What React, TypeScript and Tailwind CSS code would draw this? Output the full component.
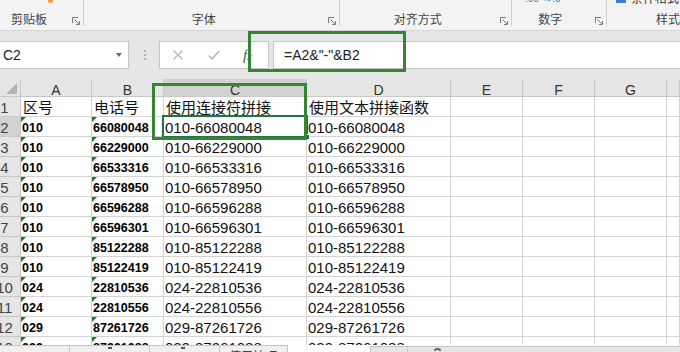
import { Fragment } from 'react';

const rows: [string, string][] = [
  ['010', '66080048'],
  ['010', '66229000'],
  ['010', '66533316'],
  ['010', '66578950'],
  ['010', '66596288'],
  ['010', '66596301'],
  ['010', '85122288'],
  ['010', '85122419'],
  ['024', '22810536'],
  ['024', '22810556'],
  ['029', '87261726'],
  ['029', '87261088'],
];

const letters = ['A', 'B', 'C', 'D', 'E', 'F', 'G', ''];

function Launcher() {
  return (
    <svg width="8" height="8" viewBox="0 0 8 8" fill="none" stroke="#7a7a7a" strokeWidth="1" className="mb-[1px] mr-[3px] ml-auto shrink-0">
      <path d="M0.5 6V0.5H6" />
      <path d="M2.5 2.5L7 7" />
      <path d="M4 7.5H7.5V4" />
    </svg>
  );
}

function Ribbon() {
  return (
    <div className="h-[31px] flex bg-[#f3f3f3] border-b border-[#d5d5d5] font-['Noto_Sans_CJK_SC',sans-serif] text-[#444]">
      <div className="w-[84px] h-[26px] flex flex-col border-r border-[#cfcfcf]">
        <div className="h-[4px] overflow-hidden flex items-start">
          <div className="ml-[48px] w-[5px] h-[3px] bg-[#e9a23b] rounded-b-[2px]" />
        </div>
        <div className="h-[8px]" />
        <div className="h-[14px] flex items-end">
          <span className="ml-[11px] text-[12px] leading-[14px]">剪贴板</span>
          <Launcher />
        </div>
      </div>
      <div className="w-[257px] h-[26px] flex flex-col border-r border-[#cfcfcf]">
        <div className="h-[12px]" />
        <div className="h-[14px] flex items-end">
          <span className="ml-[108px] text-[12px] leading-[14px]">字体</span>
          <Launcher />
        </div>
      </div>
      <div className="w-[173px] h-[26px] flex flex-col border-r border-[#cfcfcf]">
        <div className="h-[12px]" />
        <div className="h-[14px] flex items-end">
          <span className="ml-[54px] text-[12px] leading-[14px]">对齐方式</span>
          <Launcher />
        </div>
      </div>
      <div className="w-[95px] h-[26px] flex flex-col border-r border-[#cfcfcf]">
        <div className="h-[4px] overflow-hidden flex items-end font-['Liberation_Sans',sans-serif] text-[10px] leading-[10px]">
          <span className="ml-[13px] text-[#777]">.00</span>
          <span className="ml-[3px] text-[#2f6fc1]">→.0</span>
        </div>
        <div className="h-[8px]" />
        <div className="h-[14px] flex items-end">
          <span className="ml-[26px] text-[12px] leading-[14px]">数字</span>
          <Launcher />
        </div>
      </div>
      <div className="flex-1 h-[26px] flex flex-col">
        <div className="h-[4px] overflow-hidden flex items-end">
          <div className="ml-[9px] w-[10px] h-[3px] bg-[#3b7dd8] mb-[1px]" />
          <span className="ml-[5px] text-[12px] leading-[12px] text-[#333]">条件格式</span>
        </div>
        <div className="h-[8px]" />
        <div className="h-[14px] flex items-end">
          <span className="ml-[49px] text-[12px] leading-[14px] whitespace-nowrap">样式</span>
        </div>
      </div>
    </div>
  );
}

function FormulaBar() {
  return (
    <div className="mt-[10px] mb-[10px] h-[28px] flex font-['Liberation_Sans',sans-serif]">
      <div className="w-[129px] flex items-center bg-white border border-l-0 border-[#c6c6c6]">
        <span className="ml-[3px] text-[14px] text-[#222]">C2</span>
        <div className="ml-auto mr-[6px] w-0 h-0 border-x-[3px] border-x-transparent border-t-[4px] border-t-[#666]" />
      </div>
      <div className="w-[30px] flex items-center justify-center">
        <div className="flex flex-col gap-[2px] ml-[2px]">
          <div className="w-[2px] h-[2px] bg-[#b0b0b0]" />
          <div className="w-[2px] h-[2px] bg-[#b0b0b0]" />
          <div className="w-[2px] h-[2px] bg-[#b0b0b0]" />
        </div>
      </div>
      <div className="w-[110px] flex items-center bg-white border border-[#c6c6c6]">
        <svg width="10" height="10" viewBox="0 0 10 10" stroke="#b9b9b9" strokeWidth="1.4" className="ml-[13px]">
          <path d="M0.5 0.5L9.5 9.5M9.5 0.5L0.5 9.5" />
        </svg>
        <svg width="12" height="10" viewBox="0 0 12 10" fill="none" stroke="#b9b9b9" strokeWidth="1.6" className="ml-[25px]">
          <path d="M0.8 5.5L4.2 8.8L11.3 0.8" />
        </svg>
        <span className="ml-[23px] font-['Liberation_Serif',serif] italic text-[#555] text-[15px] leading-none">
          f<span className="text-[11px]">x</span>
        </span>
      </div>
      <div className="w-[4px]" />
      <div className="flex-1 flex items-center bg-white border border-r-0 border-[#c6c6c6]">
        <span className="ml-[10px] text-[14px] text-[#222]">=A2&amp;"-"&amp;B2</span>
      </div>
    </div>
  );
}

function Grid() {
  const cols = 'grid grid-cols-[21px_71px_72px_143px_144px_72px_72px_72px_1fr]';
  return (
    <div className="relative flex-1 overflow-hidden bg-white font-['Liberation_Sans',sans-serif]">
      <div className={cols}>
        <div className="h-[18px] bg-[#e6e6e6] border-r border-b border-[#c8c8c8] flex items-end justify-end">
          <svg width="11" height="11" viewBox="0 0 11 11" className="mr-[3px] mb-[2px]">
            <path d="M11 0V11H0Z" fill="#b4b4b4" />
          </svg>
        </div>
        {letters.map((l, i) => (
          <div
            key={i}
            className={`h-[18px] border-r border-b border-[#c8c8c8] text-center text-[14px] leading-[23px] overflow-hidden text-[#333] ${l === 'C' ? 'bg-[#d2d2d2]' : 'bg-[#e6e6e6]'}`}
          >
            {l}
          </div>
        ))}
      </div>

      <div className={cols}>
        <div className="h-[20px] bg-[#e6e6e6] border-r border-b border-[#c8c8c8] flex justify-center pr-[11px] text-[15px] leading-[21px] text-[#444] overflow-hidden">1</div>
        {['区号', '电话号', '使用连接符拼接', '使用文本拼接函数', '', '', '', ''].map((t, i) => (
          <div key={i} className="h-[20px] border-r border-b border-[#d4d4d4] pl-[2px] font-['Noto_Sans_CJK_SC',sans-serif] text-[15px] leading-[20px] text-[#111] whitespace-nowrap overflow-hidden">
            {t}
          </div>
        ))}
      </div>

      {rows.map(([code, phone], r) => {
        const n = r + 2;
        return (
          <div key={n} className={cols}>
            <div className={`h-[20px] border-r border-b border-[#c8c8c8] flex justify-center pr-[11px] text-[15px] leading-[21px] text-[#444] overflow-hidden ${n === 2 ? 'bg-[#d2d2d2]' : 'bg-[#e6e6e6]'}`}>
              {n}
            </div>
            {[code, phone].map((v, j) => (
              <div key={j} className="relative h-[20px] border-r border-b border-[#d4d4d4] pl-[1px] font-bold text-[12.5px] leading-[23px] text-black overflow-hidden">
                <div className="absolute top-0 left-0 w-0 h-0 border-t-[5px] border-t-[#1e7b1e] border-r-[5px] border-r-transparent" />
                {v}
              </div>
            ))}
            {[`${code}-${phone}`, `${code}-${phone}`].map((v, j) => (
              <div key={j} className="h-[20px] border-r border-b border-[#d4d4d4] pl-[1px] text-[15px] leading-[22px] text-[#111] overflow-hidden whitespace-nowrap">
                {v}
              </div>
            ))}
            {[0, 1, 2, 3].map((k) => (
              <Fragment key={k}>
                <div className="h-[20px] border-r border-b border-[#d4d4d4]" />
              </Fragment>
            ))}
          </div>
        );
      })}

      <div className="absolute left-[162px] top-[36px] w-[146px] h-[23px] border-2 border-[#217346]" />
      <div className="absolute left-[304px] top-[55px] w-[6px] h-[6px] bg-[#217346] border border-white" />
      <div className="absolute left-[152px] top-[4px] w-[155px] h-[57px] border-[3px] border-[#358535]" />
    </div>
  );
}

function TabBar() {
  return (
    <div className="h-[7px] flex bg-white">
      <div className="w-[288px] flex bg-[#f0f0f0] border-t border-[#c6c6c6]">
        <div className="w-[70px] border-r border-[#c6c6c6]" />
        <div className="w-[80px] border-r border-[#c6c6c6] flex justify-center">
          <div className="w-[4px] h-[2px] bg-[#555] mt-[1px]" />
        </div>
        <div className="w-[70px] border-r border-[#c6c6c6] flex justify-center">
          <div className="w-[4px] h-[2px] bg-[#555] mt-[1px] -ml-[4px]" />
        </div>
        <div className="flex-1 border-r border-[#c6c6c6] overflow-hidden">
          <div className="ml-[9px] mt-[2px] font-['Noto_Sans_CJK_SC',sans-serif] text-[12px] leading-[16px] text-[#444] whitespace-nowrap">使用技巧</div>
        </div>
      </div>
      <div className="w-[82px]" />
      <div className="flex-1 flex bg-[#e6e6e6] mt-[1px] border-t border-l border-[#c6c6c6]">
        <div className="w-[37px] border-r border-[#c6c6c6]" />
        <div className="ml-[26px] mt-[1px] w-[7px] h-[3px] rounded-t-full border-t-2 border-x-2 border-[#666]" />
      </div>
    </div>
  );
}

export default function App() {
  return (
    <div className="relative w-[680px] h-[352px] overflow-hidden flex flex-col bg-[#e6e6e6] font-['Liberation_Sans','Noto_Sans_CJK_SC',sans-serif]">
      <Ribbon />
      <FormulaBar />
      <Grid />
      <TabBar />
      <div className="absolute left-[248px] top-[31px] w-[158px] h-[41px] border-[3px] border-[#358535]" />
    </div>
  );
}
